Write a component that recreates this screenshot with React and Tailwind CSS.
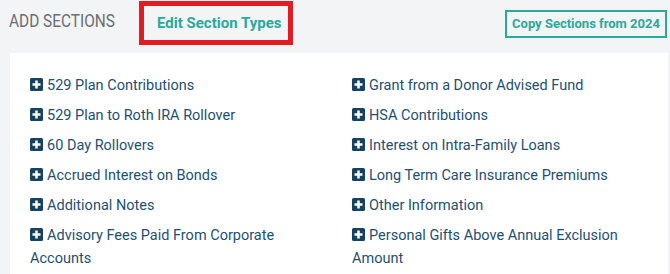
import React from "react";

const left = [
  "529 Plan Contributions",
  "529 Plan to Roth IRA Rollover",
  "60 Day Rollovers",
  "Accrued Interest on Bonds",
  "Additional Notes",
  "Advisory Fees Paid From Corporate Accounts",
];
const right = [
  "Grant from a Donor Advised Fund",
  "HSA Contributions",
  "Interest on Intra-Family Loans",
  "Long Term Care Insurance Premiums",
  "Other Information",
  "Personal Gifts Above Annual Exclusion Amount",
];

function PlusIcon() {
  return (
    <svg width="13" height="13" viewBox="0 0 13 13" className="inline-block align-[-1px] mr-[4px]">
      <rect x="0" y="0" width="13" height="13" rx="1.5" fill="#16425f" />
      <rect x="5.25" y="2.5" width="2.5" height="8" fill="#fff" />
      <rect x="2.5" y="5.25" width="8" height="2.5" fill="#fff" />
    </svg>
  );
}

function Item({ label }) {
  return (
    <div className="text-[14.5px] leading-[23px] text-[#1d4f73] pr-[20px]">
      <PlusIcon />
      {label}
    </div>
  );
}

export default function App() {
  return (
    <div
      className="w-[670px] h-[274px] bg-[#f3f4f6] overflow-hidden"
      style={{ fontFamily: "Roboto, 'Liberation Sans', sans-serif" }}
    >
      <div className="h-[53px] flex items-start">
        <div className="ml-[9px] mt-[11px] w-[105px] whitespace-nowrap">
          <div className="text-[17.5px] leading-[20px] text-[#6b6e72] origin-left scale-x-[0.88]">
            ADD SECTIONS
          </div>
        </div>
        <div className="ml-[25px] mt-[1px] w-[154px] h-[44px] border-[5px] border-[#e31b23] flex items-center pl-[13px]">
          <span className="text-[15px] font-bold text-[#2aa99b]">Edit Section Types</span>
        </div>
        <div className="ml-auto mr-[3px] mt-[10px] h-[28px] w-[162px] border-2 border-[#2aa99b] flex items-center justify-center">
          <span className="text-[13px] font-bold text-[#2aa99b]">Copy Sections from 2024</span>
        </div>
      </div>
      <div className="ml-[10px] mr-[2px] bg-white h-[221px] pl-[20px] pt-[21px] grid grid-cols-[322px_1fr]">
        <div className="flex flex-col gap-[7px]">
          {left.map((l) => (
            <Item key={l} label={l} />
          ))}
        </div>
        <div className="flex flex-col gap-[7px]">
          {right.map((l) => (
            <Item key={l} label={l} />
          ))}
        </div>
      </div>
    </div>
  );
}
